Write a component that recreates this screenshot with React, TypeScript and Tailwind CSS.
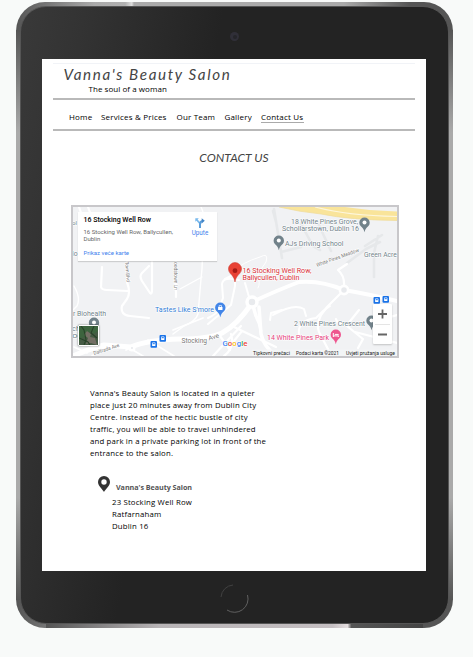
import React from "react";

const sans = "font-['Open_Sans','Noto_Sans',sans-serif]";
const lato = "font-['Lato',sans-serif]";
const roboto = "font-['Roboto',sans-serif]";

const navItems = [
  { label: "Home", width: "w-[24px]" },
  { label: "Services & Prices", width: "w-[67.5px]" },
  { label: "Our Team", width: "w-[40px]" },
  { label: "Gallery", width: "w-[28.5px]" },
];

const intro = [
  "Vanna's Beauty Salon is located in a quieter",
  "place just 20 minutes away from Dublin City",
  "Centre. Instead of the hectic bustle of city",
  "traffic, you will be able to travel unhindered",
  "and park in a private parking lot in front of the",
  "entrance to the salon.",
];

type LabelProps = { x: number; y: number; w: number; children: string; fill?: string; size?: number; rotate?: number };

function Label({ x, y, w, children, fill = "#71828a", size = 7, rotate = 0 }: LabelProps) {
  return (
    <text x={x} y={y} textLength={w} lengthAdjust="spacingAndGlyphs" fill={fill} fontSize={size} stroke="#fff" strokeWidth="1.2" paintOrder="stroke" strokeLinejoin="round" transform={`rotate(${rotate} ${x} ${y})`}>
      {children}
    </text>
  );
}

function Pin({ x, y, color, children }: { x: number; y: number; color: string; children?: React.ReactNode }) {
  return (
    <g transform={`translate(${x} ${y})`}>
      <path d="M0 9.2C-.8 6-2 5-3.9 3.1A5.2 5.2 0 1 1 3.9 3.1C2 5 .8 6 0 9.2Z" fill={color} />
      {children ?? <circle r="2" cy="-.5" fill="#fff" />}
    </g>
  );
}

function BusStop({ x, y }: { x: number; y: number }) {
  return (
    <g transform={`translate(${x} ${y})`}>
      <rect width="6.5" height="6.7" rx="1" fill="#1a73e8" />
      <rect x="1.6" y="1.4" width="3.3" height="3.7" rx=".5" fill="#fff" />
      <rect x="2.2" y="2.2" width="2.1" height="1" fill="#1a73e8" />
    </g>
  );
}

function MapCanvas() {
  return (
    <svg viewBox="73 207 324 149" className={`block h-[149px] w-[324px] ${roboto}`}>
      <rect x="73" y="207" width="324" height="149" fill="#f1f2f4" />
      <g fill="none" stroke="#e6e8ea" strokeWidth="2.6" strokeLinecap="round" strokeLinejoin="round">
        <path d="M274 209L282 258M281 252L301 247M273 211L276 222M301 224L313 246L320 250M301 223L307 219M317 221L331 251M347 263L366 249 380 242M378 236L374 253 374 277M365 246L382 235" />
      </g>
      <g fill="none" stroke="#fff" strokeLinecap="round" strokeLinejoin="round">
        <path strokeWidth="2.2" d="M102 267L101 287Q102 290 107 290L128 291M127 262V282Q131 293 127 299L122 306Q120 315 130 316L149 318M149 266L142 273Q139 276 142 281L150 293Q152 295 152 290V262M88 207L99 238M79 207L92 245M176 262V297M94 215L87 225" />
        <path strokeWidth="1.4" d="M201 207Q207 219 202 237V252Q203 263 201 279L198 314Q196 321 184 326L173 334M202 277L180 289M74 286Q81 298 77 306L73 310" />
        <path strokeWidth="2" d="M239 280Q223 276 222 284L223 298 219 309Q217 314 208 318M245 283L249 297M225 279L231 276M235 282V286L231 305 208 324" />
        <path strokeWidth="1" d="M236 270Q241 263 260 257Q269 252 266 262Q260 270 257 277Q261 282 258 288" />
        <path strokeWidth="5" d="M73 356Q92 348 104 345L131 347Q147 340 180 339Q209 339 222 333Q237 325 252 303" />
        <path strokeWidth="4" d="M252 302Q278 290 299 282Q321 280 344 290Q368 294 397 301" />
        <path strokeWidth="3.5" d="M259 307L261 334Q264 347 276 356M253 306L256 316Q260 323 261 331" />
        <path strokeWidth="2.2" d="M220 336L230 350M231 334Q235 348 224 356M241 326L213 356M234 327L276 347M242 331L230 346" />
        <path strokeWidth="2" d="M273 315Q294 303 304 309L306 316M282 310L271 313 270 320M299 335Q297 320 316 318L323 311 330 306" />
        <path strokeWidth="2.2" d="M344 287Q345 276 338 270L347 264M341 293L327 307 321 315Q316 325 319 332L329 351M359 310L347 325Q337 325 336 319M347 326L363 339L358 348M371 322L397 315M355 332L397 343" />
        <path strokeWidth="1.7" d="M92 356L108 345M74 347L87 353M173 330L203 318M148 340L174 356M131 349L143 356M137 345L126 350" />
      </g>
      <g fill="#e8eaed" stroke="#fff">
        <circle cx="252" cy="302" r="5" strokeWidth="3.5" />
        <circle cx="344" cy="290" r="4.1" strokeWidth="2.7" />
        <circle cx="132" cy="348" r="2.3" strokeWidth="2.5" />
      </g>
      <path d="M279 207H345Q368 210.5 397 211.5V220.5Q350 220 321 214Q300 212 279 207Z" fill="#f9e49a" />
      <path d="M315 207Q346 215.5 397 216.5" fill="none" stroke="#fdf6dc" strokeWidth="1.2" />
      <path d="M279 207Q300 212 321 214Q350 220 397 220.5" fill="none" stroke="#efdb9a" strokeWidth=".7" />

      <Label x={291} y={223.8} w={67}>18 White Pines Grove,</Label>
      <Label x={282} y={230.6} w={77}>Schollarstown, Dublin 16</Label>
      <Label x={285} y={245.7} w={58.5}>AJs Driving School</Label>
      <Label x={364} y={256.7} w={32.7}>Green Acre</Label>
      <Label x={73} y={315.8} w={33}>r Biohealth</Label>
      <Label x={72} y={330.8} w={8}>ch</Label>
      <Label x={72} y={338} w={8}>ol</Label>
      <Label x={72} y={225} w={5} size={6}>ol</Label>
      <Label x={72} y={256} w={5.5}>lo</Label>
      <Label x={294} y={326} w={71}>2 White Pines Crescent</Label>
      <Label x={155} y={312} w={59} fill="#347ed6">Tastes Like S'more</Label>
      <Label x={267} y={339.7} w={62} fill="#e5417c">14 White Pines Park</Label>
      <Label x={242.5} y={273} w={69} fill="#d72f37">16 Stocking Well Row,</Label>
      <Label x={242.5} y={279.8} w={57} fill="#d72f37">Ballycullen, Dublin</Label>
      <Label x={181.5} y={342.5} w={25.5} size={6.5} fill="#777">Stocking</Label>
      <Label x={209} y={340.5} w={11} size={6.2} fill="#777" rotate={-17}>Ave</Label>
      <Label x={94} y={355} w={27} size={5.2} fill="#777" rotate={-18}>Daltrada Ave</Label>
      <Label x={317} y={267} w={45} size={5.4} fill="#777" rotate={-20}>White Pines Meadow</Label>
      <Label x={125} y={262} w={20} size={5} fill="#777" rotate={85}>Town Blvd</Label>
      <Label x={174} y={262} w={28} size={5} fill="#777" rotate={90}>oodstown Ln</Label>

      <Pin x={364.5} y={223} color="#71828a" />
      <Pin x={278.8} y={241} color="#71828a" />
      <Pin x={94} y={323} color="#71828a" />
      <Pin x={371.5} y={321} color="#71828a" />
      <Pin x={220.3} y={308} color="#4285e8">
        <rect x="-2.2" y="-1" width="4.4" height="3" fill="#fff" />
        <path d="M-1.2-1v-1.4h2.4V-1" fill="none" stroke="#fff" strokeWidth=".7" />
      </Pin>
      <Pin x={335.8} y={335} color="#ee568f">
        <path d="M-2.5-2v4M-2.5.9h5V2M-1-.6h3.5v1" fill="none" stroke="#fff" strokeWidth="1" />
      </Pin>
      <path d="M235 282C234 277 232.5 276 230.4 273.6A6.5 6.5 0 1 1 239.6 273.6C237.5 276 236 277 235 282Z" fill="#e84235" stroke="#c93228" strokeWidth=".5" />
      <circle cx="235" cy="270.7" r="2.4" fill="#a51b16" />
      <BusStop x={150.5} y={341} />
      <BusStop x={159.5} y={335} />
      <BusStop x={373.5} y={297} />
      <BusStop x={382.5} y={296} />

      <rect x="252" y="349.5" width="145" height="6.5" fill="#f4f5f6" opacity=".8" />
      <g fontSize="5.3" fill="#222">
        <text x="253" y="354.5" textLength="37" lengthAdjust="spacingAndGlyphs">Tipkovni prečaci</text>
        <text x="296" y="354.5" textLength="43" lengthAdjust="spacingAndGlyphs">Podaci karta ©2021</text>
        <text x="346" y="354.5" textLength="49" lengthAdjust="spacingAndGlyphs">Uvjeti pružanja usluge</text>
      </g>
      <text x="222.5" y="346" fontSize="7.8" fontWeight="500" textLength="25" lengthAdjust="spacingAndGlyphs" stroke="#fff" strokeWidth="1" paintOrder="stroke">
        <tspan fill="#4285f4">G</tspan><tspan fill="#ea4335">o</tspan><tspan fill="#fbbc05">o</tspan><tspan fill="#4285f4">g</tspan><tspan fill="#34a853">l</tspan><tspan fill="#ea4335">e</tspan>
      </text>
    </svg>
  );
}

function MapPanel() {
  return (
    <section className="relative ml-[29px] h-[153px] w-[328px] shrink-0 overflow-hidden border-2 border-[#c8c7ca]">
      <MapCanvas />
      <div className={`absolute left-[5px] top-[5px] flex h-[49px] w-[139px] bg-white shadow-[0_1px_1px_rgba(0,0,0,0.15)] ${roboto}`}>
        <div className="w-[105px] whitespace-nowrap pl-[5.5px] pt-[4px]">
          <div className="text-[7px] font-medium leading-[9px] text-black">16 Stocking Well Row</div>
          <div className="mt-[3px] text-[6px] leading-[7px] text-[#666]">16 Stocking Well Row, Ballycullen,<br />Dublin</div>
          <div className="mt-[7px] text-[6px] leading-[8px] text-[#427fed]">Prikaz veće karte</div>
        </div>
        <div className="flex flex-1 flex-col items-center pt-[6px]">
          <svg viewBox="0 0 10 10" className="h-[10px] w-[10px]">
            <path d="M1.5 1.5L5 5.5" fill="none" stroke="#78b9ed" strokeWidth="1.8" />
            <path d="M.3 .3H3.8L.3 3.8Z" fill="#78b9ed" />
            <path d="M5 10V6.2Q5.2 3.4 7.5 3" fill="none" stroke="#5b9edb" strokeWidth="2" />
            <path d="M6.7 .2L9.8 2.8L6.7 5.4Z" fill="#4386c8" />
          </svg>
          <div className="mt-[1px] text-[6.3px] leading-[8px] text-[#427fed]">Upute</div>
        </div>
      </div>
      <div className="absolute bottom-[10px] left-[5px] h-[21px] w-[21px] rounded-[1px] border border-white bg-[#455a44] shadow-[0_0_2px_rgba(0,0,0,0.6)]">
        <svg viewBox="0 0 19 19" className="h-full w-full">
          <path d="M0 0H19V5L15 8 12 5 8 8 9 12 4 11 0 16Z" fill="#3c643e" />
          <path d="M8 5L12 8 11 11 16 12 18 19 12 17 7 18 9 12 5 9Z" fill="#736f64" />
          <path d="M2 0L5 4 7 14 5 19M15 0 12 7 18 12M0 12 9 16 11 19" stroke="#284329" strokeWidth="1.1" fill="none" />
        </svg>
      </div>
      <div className="absolute bottom-[12px] right-[5px] h-[40px] w-[19px] rounded-[1px] bg-white shadow-[0_1px_2px_rgba(0,0,0,0.2)]">
        <svg viewBox="0 0 19 40" className="h-[40px] w-[19px]">
          <path d="M5 10h9M9.5 5.5v9M5 30.5h9" stroke="#666" strokeWidth="1.8" />
          <path d="M2 20.5h15" stroke="#e5e5e5" />
        </svg>
      </div>
    </section>
  );
}

function SalonPage() {
  return (
    <main className={`flex h-[512px] w-[384px] flex-col overflow-hidden bg-white text-[#222] ${sans}`}>
      <header className="mx-[11px] mt-[4px] h-[37px] shrink-0 border-b-2 border-t border-b-[#b9b9b9] border-t-[#f1f3f7]">
        <h1 className={`pl-[10.5px] pt-[1px] text-[15.2px] font-normal italic leading-[19px] tracking-[1.63px] text-[#444] ${lato}`}>Vanna's Beauty Salon</h1>
        <p className="whitespace-nowrap pl-[35.5px] text-[8px] leading-[10px] tracking-[0.05px] text-black">The soul of a woman</p>
      </header>
      <nav className="mx-[11px] flex h-[31px] shrink-0 items-start gap-[8px] whitespace-nowrap border-b-2 border-[#b9b9b9] pl-[16px] pt-[11px] text-[8px] leading-[11px] tracking-[0.18px] text-black">
        {navItems.map((item) => <a key={item.label} className={item.width}>{item.label}</a>)}
        <a className="h-[12px] w-[43px] border-b border-[#aaa]">Contact Us</a>
      </nav>
      <h2 className={`mt-[19px] h-[16px] shrink-0 text-center text-[12.1px] font-normal italic leading-[16px] text-[#444] ${lato}`}>CONTACT US</h2>
      <div className="h-[39px] shrink-0" />
      <MapPanel />
      <section className="ml-[48px] mt-[29px] whitespace-nowrap text-[7.8px] leading-[12px] tracking-[0.17px] text-black">
        {intro.map((line) => <p key={line}>{line}</p>)}
      </section>
      <address className="ml-[56px] mt-[16px] whitespace-nowrap not-italic">
        <div className="flex h-[21px]">
          <svg viewBox="0 0 12 16" className="mt-[1px] h-[16px] w-[12px]">
            <path fillRule="evenodd" fill="#333" d="M6 16C4.8 13.5 0 10 0 6A6 6 0 1 1 12 6C12 10 7.2 13.5 6 16ZM6 3.3A2.7 2.7 0 1 0 6 8.7 2.7 2.7 0 0 0 6 3.3Z" />
          </svg>
          <strong className="ml-[6px] mt-[6px] text-[7.2px] font-bold leading-[12px] tracking-[-0.05px] text-[#555]">Vanna's Beauty Salon</strong>
        </div>
        <div className="pl-[14px] text-[7.8px] leading-[12px] tracking-[0.17px] text-black">
          <p>23 Stocking Well Row</p>
          <p>Ratfarnaham</p>
          <p>Dublin 16</p>
        </div>
      </address>
    </main>
  );
}

export default function App() {
  return (
    <div className="h-[657px] w-[473px] overflow-hidden bg-[#f8faf9] pl-[16px] pt-[2px]">
      <div className="relative h-[626px] w-[437px] rounded-[29px] bg-[linear-gradient(90deg,#555_0%,#aaa_18%,#b0b0b0_25%,#ddd_26.5%,#aaa_27%,#aaa_75%,#555_90%,#555_100%)] p-[4px]">
        <div className="absolute inset-x-0 bottom-[28px] top-[28px] bg-[linear-gradient(180deg,#555,#aaa_18%,#aaa_82%,#555)]" />
        <div className="absolute inset-x-[30px] bottom-0 h-[4px] bg-[linear-gradient(90deg,#555,#b8b4b6_30%,#c5bfc2_76%,#e4dedf_80%,#555_81%,#454545)]" />
        <div className="relative h-[618px] rounded-[26px] border border-[#555] bg-[linear-gradient(100deg,#393939_0%,#333_12%,#232323_38%,#232323_100%)] pl-[21px] pt-[52px]">
          <div className="absolute left-[209px] top-[25px] flex h-[9px] w-[9px] items-center justify-center rounded-full bg-[#302f38]">
            <div className="h-[4px] w-[4px] rounded-full bg-[#25252a]" />
          </div>
          <SalonPage />
          <svg viewBox="0 0 30 30" className="absolute bottom-[10px] left-[198px] h-[30px] w-[30px]">
            <g fill="none" strokeWidth="1">
              <path d="M2 14A13 13 0 0 1 14 2" stroke="#414141" />
              <path d="M28.5 12A13.5 13.5 0 0 1 8 27" stroke="#606060" />
            </g>
          </svg>
        </div>
      </div>
    </div>
  );
}
